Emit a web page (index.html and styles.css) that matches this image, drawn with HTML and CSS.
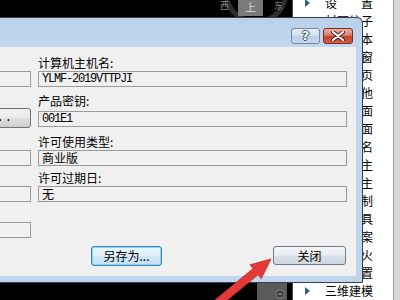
FILE: index.html
```html
<!DOCTYPE html>
<html lang="zh-CN">
<head>
<meta charset="utf-8">
<title>系统属性</title>
<link rel="stylesheet" href="styles.css">
</head>
<body>
<div class="desk">
  <div class="viewcube">
    <svg class="ring" width="80" height="30" viewBox="0 0 80 30"><circle cx="41" cy="-8" r="30" fill="none" stroke="#2e2e2e" stroke-width="5"/></svg>
    <span class="dir west">西</span>
    <span class="cube">上</span>
    <span class="dir east">东</span>
  </div>

  <div class="tree">
    <div class="row"><span class="tri"></span><span class="lbl">设　　置</span></div>
    <div class="row"><span class="tri none"></span><span class="lbl">材图纹子</span></div>
    <div class="row"><span class="tri none"></span><span class="lbl">文档样本</span></div>
    <div class="row"><span class="tri none"></span><span class="lbl">打开窗</span></div>
    <div class="row"><span class="tri none"></span><span class="lbl">开始页</span></div>
    <div class="row"><span class="tri none"></span><span class="lbl">其他</span></div>
    <div class="row"><span class="tri none"></span><span class="lbl">平面</span></div>
    <div class="row"><span class="tri none"></span><span class="lbl">立面</span></div>
    <div class="row"><span class="tri none"></span><span class="lbl">命名</span></div>
    <div class="row"><span class="tri none"></span><span class="lbl">场景主</span></div>
    <div class="row"><span class="tri none"></span><span class="lbl">图纸主</span></div>
    <div class="row"><span class="tri none"></span><span class="lbl">绘制</span></div>
    <div class="row"><span class="tri none"></span><span class="lbl">工具</span></div>
    <div class="row"><span class="tri none"></span><span class="lbl">方案</span></div>
    <div class="row"><span class="tri none"></span><span class="lbl">防火</span></div>
    <div class="row"><span class="tri none"></span><span class="lbl">位置</span></div>
    <div class="row"><span class="tri"></span><span class="lbl">三维建模</span></div>
  </div>
  <div class="scrollbar"></div>

  <div class="statusbox">
    <svg width="10" height="10" viewBox="0 0 10 10"><circle cx="5" cy="5" r="4" fill="#3b3b3b" stroke="#7a7a7a" stroke-width="1"/><line x1="3" y1="5" x2="7" y2="5" stroke="#9a9a9a" stroke-width="1.2"/></svg>
  </div>

  <div class="dialog">
    <div class="titlebar">
      <button class="cap help">?</button>
      <button class="cap close"><svg width="14" height="10" viewBox="0 0 14 10"><path d="M2 1 L12 9 M12 1 L2 9" stroke="#5a1a12" stroke-width="4" stroke-linecap="round"/><path d="M2 1 L12 9 M12 1 L2 9" stroke="#ffffff" stroke-width="2.2" stroke-linecap="round"/></svg></button>
    </div>
    <div class="client">
      <div class="cols">
        <div class="leftcol">
          <div class="box b1"></div>
          <button class="btn small">...</button>
          <div class="box b3"></div>
          <div class="box b4"></div>
          <div class="box b5"></div>
        </div>
        <div class="rightcol">
          <div class="field f1">
            <div class="label">计算机主机名:</div>
            <div class="input mono">YLMF-2019VTTPJI</div>
          </div>
          <div class="field f2">
            <div class="label">产品密钥:</div>
            <div class="input mono">001E1</div>
          </div>
          <div class="field f3">
            <div class="label">许可使用类型:</div>
            <div class="input">商业版</div>
          </div>
          <div class="field f4">
            <div class="label">许可过期日:</div>
            <div class="input">无</div>
          </div>
        </div>
      </div>
      <div class="actions">
        <button class="btn save">另存为...</button>
        <button class="btn shut">关闭</button>
      </div>
    </div>
  </div>

  <svg class="arrow" width="400" height="300" viewBox="0 0 400 300"><polygon points="271,259 261.3,278.6 258.1,274.8 217.5,308.1 212.5,301.9 253.1,268.6 249.9,264.8" fill="#e23a36" stroke="#c82a28" stroke-width="0.8"/></svg>
</div>
</body>
</html>
```
FILE: styles.css
```css
* { box-sizing: border-box; }
html, body { margin: 0; padding: 0; }
body {
  width: 400px;
  height: 300px;
  overflow: hidden;
  background: #000;
  font-family: "Noto Sans CJK SC", "Liberation Sans", sans-serif;
  font-size: 12px;
  color: #000;
}
.desk { position: relative; width: 400px; height: 300px; overflow: hidden; background: #000; }

/* view cube at top */
.viewcube { position: absolute; left: 215px; top: 0; width: 76px; height: 18px; }
.viewcube .ring { position: absolute; left: 0; top: 0; }
.dir { position: absolute; top: 0; font-size: 9px; line-height: 12px; color: #8a8a8a; }
.west { left: 5px; }
.east { left: 59px; }
.cube {
  position: absolute; left: 23px; top: 0; width: 25px; height: 16px;
  background: #7a7a7a; color: #d8d8d8; font-size: 11px; line-height: 15px; text-align: center;
}

/* tree panel on the right */
.tree {
  position: absolute; left: 292px; top: 0; width: 101px; height: 300px;
  background: #fff; border-left: 1px solid #4a4a4a;
  display: flex; flex-direction: column;
}
.row { display: flex; align-items: center; height: 18px; flex: none; margin-left: 12px; }
.row:first-child { margin-top: -6px; }
.tri { width: 20px; flex: none; height: 8px; position: relative; }
.tri::before {
  content: ""; position: absolute; left: 0; top: 0;
  border-left: 5px solid #2c5d8f; border-top: 4px solid transparent; border-bottom: 4px solid transparent;
}
.tri.none::before { display: none; }
.lbl { width: 48px; text-align: right; font-size: 12px; line-height: 18px; white-space: nowrap; color: #000; }
.scrollbar {
  position: absolute; left: 393px; top: 0; width: 7px; height: 300px;
  background: #d9d9d9; border-left: 1px solid #9a9a9a;
}

.statusbox {
  position: absolute; left: 257px; top: 283px; width: 30px; height: 17px;
  background: #5a5a5a; display: flex; justify-content: flex-end; align-items: center; padding-right: 2px; padding-top: 5px;
}

/* dialog window */
.dialog {
  position: absolute; left: -60px; top: 17px; width: 423px; height: 266px;
  border: 1px solid #34404d; border-radius: 6px 6px 0 0;
  background: linear-gradient(#b8d0e9, #c3d8ee 30px, #bfd5ec);
  padding: 0 6px 6px 6px;
  display: flex; flex-direction: column;
}
.titlebar {
  height: 29px; flex: none;
  display: flex; justify-content: flex-end; align-items: flex-start; gap: 3px;
  padding-top: 10px; padding-right: 3px;
}
.cap {
  height: 16px; margin: 0; padding: 0; border-radius: 3px;
  display: flex; align-items: center; justify-content: center;
  font-family: "DejaVu Sans", sans-serif;
}
.help {
  width: 29px;
  border: 1px solid #6f88a6;
  background: linear-gradient(#e6eef7, #d2dfee 45%, #bccfe4 55%, #c6d8ec);
  color: #fff; font-weight: bold; font-size: 13px; line-height: 14px;
  text-shadow: 0 0 1px #2e4a6a, 1px 0 0 #3b5575, -1px 0 0 #3b5575, 0 1px 0 #3b5575, 0 -1px 0 #3b5575;
}
.close {
  width: 30px;
  border: 1px solid #7d2a1e;
  background: linear-gradient(#e8b3a9, #d77d6b 45%, #c3402a 55%, #d2604a);
}

.client {
  flex: 1; background: #f0f0f0;
  display: flex; flex-direction: column;
}
.cols { display: flex; gap: 7px; height: 191px; flex: none; }
.leftcol { width: 84px; flex: none; display: flex; flex-direction: column; }
.box { height: 16px; border: 1px solid #9a9a9a; background: #f0f0f0; flex: none; }
.b1 { margin-top: 24px; }
.b3 { margin-top: 22px; }
.b4 { margin-top: 20px; }
.b5 { margin-top: 20px; }

.btn {
  margin: 0; font-family: "Noto Sans CJK SC", sans-serif; font-size: 12px; color: #000;
  border: 1px solid #707070; border-radius: 3px;
  background: linear-gradient(#f2f2f2, #ebebeb 45%, #dddddd 55%, #cfcfcf);
  height: 20px; padding: 0; line-height: 16px;
}
.small {
  margin-top: 21px; width: 76px; align-self: flex-end;
  text-align: right; padding-right: 17px;
  font-family: "Liberation Mono", monospace; letter-spacing: 1px;
}

.rightcol { flex: 1; padding-right: 9px; padding-top: 9px; }
.field { display: flex; flex-direction: column; }
.label { line-height: 14px; height: 14px; white-space: nowrap; }
.input {
  height: 16px; border: 1px solid #9a9a9a; background: #f0f0f0;
  padding-left: 3px; line-height: 14px; white-space: nowrap; overflow: hidden;
}
.mono { font-family: "Liberation Mono", monospace; font-size: 12px; letter-spacing: -1.2px; }
.f1 .label { margin-bottom: 1px; }
.f2 { margin-top: 7px; }
.f2 .label { margin-bottom: 3px; }
.f3 { margin-top: 8px; }
.f3 .label { margin-bottom: 1px; }
.f4 { margin-top: 5px; }
.f4 .label { margin-bottom: 1px; }

.actions {
  margin-top: 8px; display: flex; justify-content: flex-end; gap: 111px; padding-right: 10px;
}
.save {
  width: 71px;
  border-color: #3c7fb1;
  box-shadow: inset 0 0 0 1px #7fd8f5;
  background: linear-gradient(#eaf6fd, #e0eff9 45%, #cfe6f5 55%, #c6e0f2);
}
.shut { width: 73px; height: 19px; border-color: #6f7a86; background: linear-gradient(#f4f6f8, #eaeef2 45%, #d9e0e7 55%, #cfd8e0); }

.arrow { position: absolute; left: 0; top: 0; pointer-events: none; }
```
